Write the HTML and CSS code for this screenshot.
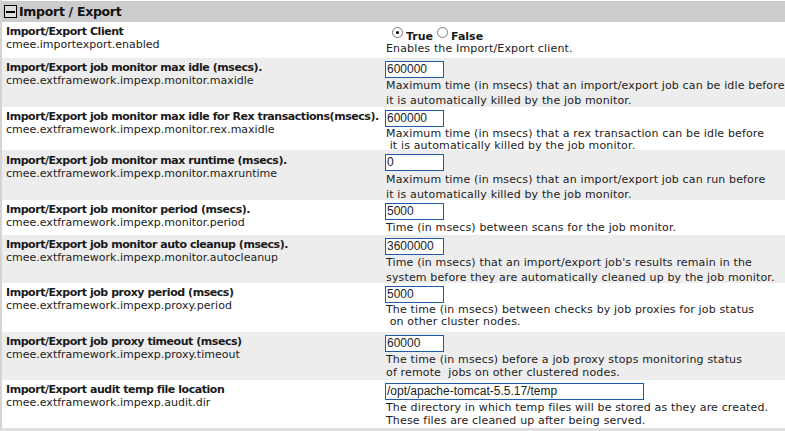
FILE: index.html
```html
<!DOCTYPE html>
<html>
<head>
<meta charset="utf-8">
<link rel="stylesheet" href="styles.css">
</head>
<body>
<div class="panel">
  <div class="header">
    <span class="toggle"><span class="bar"></span></span>
    <span class="title">Import / Export</span>
  </div>

  <div class="row r1">
    <div class="left">
      <div class="label">Import/Export Client</div>
      <div class="key">cmee.importexport.enabled</div>
    </div>
    <div class="right">
      <div class="radios">
        <span class="radio on"></span><span class="opt">True</span>
        <span class="radio"></span><span class="opt">False</span>
      </div>
      <div class="desc">Enables the Import/Export client.</div>
    </div>
  </div>

  <div class="row alt r2">
    <div class="left">
      <div class="label">Import/Export job monitor max idle (msecs).</div>
      <div class="key">cmee.extframework.impexp.monitor.maxidle</div>
    </div>
    <div class="right">
      <div class="field">600000</div>
      <div class="desc">Maximum time (in msecs) that an import/export job can be idle before<br>it is automatically killed by the job monitor.</div>
    </div>
  </div>

  <div class="row r3">
    <div class="left">
      <div class="label">Import/Export job monitor max idle for Rex transactions(msecs).</div>
      <div class="key">cmee.extframework.impexp.monitor.rex.maxidle</div>
    </div>
    <div class="right">
      <div class="field">600000</div>
      <div class="desc tight">Maximum time (in msecs) that a rex transaction can be idle before<br>&nbsp;it is automatically killed by the job monitor.</div>
    </div>
  </div>

  <div class="row alt r4">
    <div class="left">
      <div class="label">Import/Export job monitor max runtime (msecs).</div>
      <div class="key">cmee.extframework.impexp.monitor.maxruntime</div>
    </div>
    <div class="right">
      <div class="field">0</div>
      <div class="desc loose">Maximum time (in msecs) that an import/export job can run before<br>it is automatically killed by the job monitor.</div>
    </div>
  </div>

  <div class="row r5">
    <div class="left">
      <div class="label">Import/Export job monitor period (msecs).</div>
      <div class="key">cmee.extframework.impexp.monitor.period</div>
    </div>
    <div class="right">
      <div class="field">5000</div>
      <div class="desc">Time (in msecs) between scans for the job monitor.</div>
    </div>
  </div>

  <div class="row alt r6">
    <div class="left">
      <div class="label">Import/Export job monitor auto cleanup (msecs).</div>
      <div class="key">cmee.extframework.impexp.monitor.autocleanup</div>
    </div>
    <div class="right">
      <div class="field">3600000</div>
      <div class="desc">Time (in msecs) that an import/export job's results remain in the<br>system before they are automatically cleaned up by the job monitor.</div>
    </div>
  </div>

  <div class="row r7">
    <div class="left">
      <div class="label">Import/Export job proxy period (msecs)</div>
      <div class="key">cmee.extframework.impexp.proxy.period</div>
    </div>
    <div class="right">
      <div class="field">5000</div>
      <div class="desc tight">The time (in msecs) between checks by job proxies for job status<br>&nbsp;on other cluster nodes.</div>
    </div>
  </div>

  <div class="row alt r8">
    <div class="left">
      <div class="label">Import/Export job proxy timeout (msecs)</div>
      <div class="key">cmee.extframework.impexp.proxy.timeout</div>
    </div>
    <div class="right">
      <div class="field">60000</div>
      <div class="desc mid">The time (in msecs) before a job proxy stops monitoring status<br>of remote&nbsp; jobs on other clustered nodes.</div>
    </div>
  </div>

  <div class="row r9">
    <div class="left">
      <div class="label">Import/Export audit temp file location</div>
      <div class="key">cmee.extframework.impexp.audit.dir</div>
    </div>
    <div class="right">
      <div class="field wide">/opt/apache-tomcat-5.5.17/temp</div>
      <div class="desc mid">The directory in which temp files will be stored as they are created.<br>These files are cleaned up after being served.</div>
    </div>
  </div>
</div>
</body>
</html>
```

FILE: styles.css
```css
html, body {
  margin: 0;
  padding: 0;
  background: #ffffff;
}

body {
  font-family: "DejaVu Sans", Verdana, sans-serif;
  font-size: 11px;
  color: #1a1a1a;
}

.panel {
  width: 785px;
  height: 431px;
  box-sizing: border-box;
  border-left: 2px solid #d4d4d4;
  border-bottom: 3px solid #e0e0e0;
  overflow: hidden;
}

.header {
  margin-top: 1px;
  height: 21px;
  background: #cccccc;
  display: flex;
  align-items: center;
  margin-left: -2px;
  padding-left: 4px;
}

.toggle {
  width: 11px;
  height: 11px;
  border: 1px solid #000;
  background: #dcdcdc;
  display: flex;
  align-items: center;
  justify-content: center;
  margin-right: 2px;
}

.toggle .bar {
  width: 9px;
  height: 2px;
  background: #000;
}

.title {
  font-weight: bold;
  font-size: 12.5px;
  letter-spacing: -0.3px;
  color: #111;
}

.row {
  display: flex;
  box-sizing: border-box;
  padding-top: 3px;
}

.row.alt {
  background: #ededed;
}

.left {
  width: 378px;
  padding-left: 4px;
  box-sizing: border-box;
  line-height: 13px;
}

.label {
  font-weight: bold;
  white-space: nowrap;
  letter-spacing: -0.45px;
}

.key {
  white-space: nowrap;
  color: #222;
}

.right {
  padding-left: 6px;
}

.field {
  width: 56px;
  height: 15px;
  border: 1px solid #1f5aa6;
  background: #fff;
  font-family: "Liberation Sans", Arial, sans-serif;
  font-size: 12px;
  line-height: 15px;
  padding-left: 1px;
  color: #222;
  margin-left: -1px;
}

.field.wide {
  width: 256px;
}

.desc {
  line-height: 15px;
  white-space: nowrap;
  color: #222;
  letter-spacing: 0.15px;
}

.desc.tight {
  line-height: 12px;
  margin-top: 1px;
}

.desc.mid {
  line-height: 13px;
  margin-top: 1px;
}

.desc.loose {
  line-height: 15px;
  margin-top: 1px;
}

.radios {
  display: flex;
  align-items: center;
  height: 14px;
  margin-top: 2px;
  padding-left: 6px;
}

.radio {
  width: 11px;
  height: 11px;
  border-radius: 50%;
  border: 1px solid #7a7a7a;
  background: #fff;
  box-sizing: border-box;
  position: relative;
  margin-top: -3px;
}

.radio.on::after {
  content: "";
  position: absolute;
  left: 3px;
  top: 3px;
  width: 3px;
  height: 3px;
  border-radius: 50%;
  background: #000;
}

.opt {
  font-weight: bold;
  margin: 0 4px 0 3px;
  position: relative;
  top: 2px;
}

.r1 { height: 36px; }
.r2 { height: 49px; }
.r3 { height: 43px; }
.r4 { height: 50px; padding-top: 4px; }
.r5 { height: 35px; }
.r6 { height: 48px; }
.r7 { height: 49px; }
.r8 { height: 48px; }
.r9 { height: 48px; }
```
